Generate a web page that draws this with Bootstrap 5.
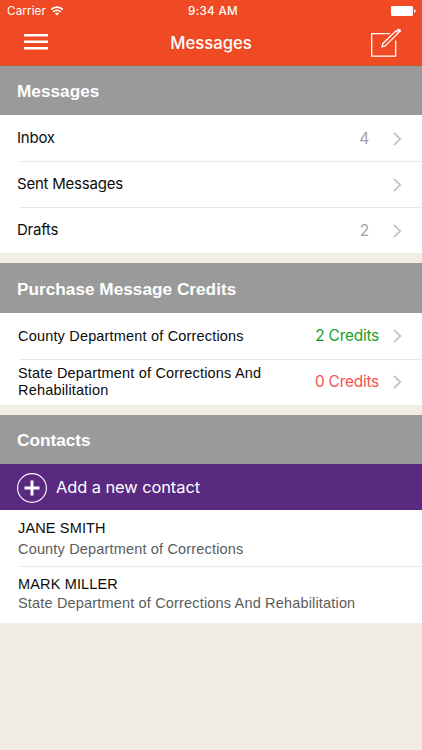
<!DOCTYPE html>
<html lang="en">
<head>
<meta charset="utf-8">
<meta name="viewport" content="width=device-width, initial-scale=1">
<title>Messages</title>
<link href="https://cdn.jsdelivr.net/npm/bootstrap@5.3.0/dist/css/bootstrap.min.css" rel="stylesheet">
<style>
body{background:#f0ede5;font-family:Inter,sans-serif;color:#0c0c0c;height:750px;overflow:hidden}
.app-top{background:#f04a24;height:66px;border-bottom:1px solid #c2583f}
.status-bar{height:22px;padding:0 6px 0 7px;font-size:11.7px;line-height:22px}
.status-bar>*{flex:1 1 0}
.carrier{letter-spacing:.1px}
.clock{letter-spacing:.28px;padding-left:3px}
.title-bar{height:43px;padding:0 20px 0 24px}
.menu-icon{margin-bottom:3px}
.compose-icon{margin-bottom:2px}
.app-title{font-size:16.7px;font-weight:500;line-height:43px;padding-left:3px}
.section-head{background:#9a9a9a;height:49px;padding:1px 17px 0;font:bold 17.2px/48px "Liberation Sans",Arial,sans-serif;letter-spacing:.02px}
.section-tall{height:50px;padding-top:2px}
.rows{--bs-list-group-border-radius:0;--bs-list-group-bg:#fff}
.line-row{position:relative;height:46px;padding:1px 20px 0 17px;border:0;color:#0c0c0c;font-size:15px;letter-spacing:-.22px}
.agency-row.line-row{padding:0 20px 0 18px}
.line-row+.line-row::before,.person+.person::before{content:"";position:absolute;top:0;left:20px;right:0;height:1px;background:#e9e9ea}
.num{color:#a3a3a7;font-size:15.6px;margin-right:24px}
.agency{font-family:"Liberation Sans",Arial,sans-serif;font-size:14.5px;line-height:17px;letter-spacing:.18px}
.credit{font-size:15.4px;letter-spacing:-.22px;margin-right:14px;white-space:nowrap}
.credit-ok{color:#16a02c}.credit-none{color:#f4524f}
.gap-band{margin-bottom:10px}
.add-row{background:#5a2a80;height:46px;padding:1px 17px 0;font-size:16.4px}
.add-label{padding-left:1px;letter-spacing:-.06px}
.person{position:relative;height:56px;padding:9px 18px 0;border:0;font-family:"Liberation Sans",Arial,sans-serif;font-size:14.5px;line-height:18px;color:#0c0c0c}
.person+.person{height:57px}
.person-name{letter-spacing:.15px}
.person-org{color:#5c5c5c;letter-spacing:.17px;line-height:20px}
.person:first-child .person-org{padding-top:2px}
svg{display:block;flex:none}
</style>
<script src="https://cdn.jsdelivr.net/npm/bootstrap@5.3.0/dist/js/bootstrap.bundle.min.js"></script>
</head>
<body>
<header class="app-top text-white">
  <div class="status-bar d-flex align-items-center">
    <div class="d-flex align-items-center"><span class="carrier">Carrier</span>
      <svg class="ms-1" width="14" height="10" viewBox="0 0 14 10" fill="none" stroke="#fff" stroke-width="1.7"><path d="M1.2 3.6a8.2 8.2 0 0 1 11.6 0M3.3 5.8a5.2 5.2 0 0 1 7.4 0"/><path d="M7 9.6 4.9 7.5a3 3 0 0 1 4.2 0z" fill="#fff" stroke="none"/></svg>
    </div>
    <div class="text-center fw-medium clock">9:34 AM</div>
    <div class="d-flex justify-content-end">
      <svg width="25" height="10" viewBox="0 0 25 10" fill="#fff"><rect width="22" height="10" rx="1.2"/><path d="M23 3.2q1.6 .4 1.6 1.8T23 6.8z"/></svg>
    </div>
  </div>
  <nav class="title-bar d-flex align-items-center justify-content-between">
    <svg class="menu-icon" width="24" height="16" viewBox="0 0 24 16" fill="#fff"><path d="M0 0h24v2.4H0zM0 6.5h24v2.4H0zM0 13h24v2.4H0z"/></svg>
    <div class="app-title">Messages</div>
    <svg class="compose-icon" width="31" height="30" viewBox="0 0 31 30" fill="none" stroke="#fff" stroke-width="1.3"><path d="M19 5.6H.7v22.6h24V12.5"/><path d="M11 18.8 11.8 15.6 25 2.9 27.2 5.1 14.1 18z"/><path d="M25.7 1.9q2-2 3.6-.5t-.5 3.6z" fill="#fff" stroke="none"/></svg>
  </nav>
</header>
<main>
  <section class="gap-band">
    <div class="section-head text-white">Messages</div>
    <div class="list-group rows">
      <a href="#" class="list-group-item line-row d-flex align-items-center"><span class="me-auto">Inbox</span><span class="num">4</span><svg width="9" height="14" viewBox="0 0 9 14" fill="none" stroke="#c5c5ca" stroke-width="1.9"><path d="M1 .9 7.2 7 1 13.1"/></svg></a>
      <a href="#" class="list-group-item line-row d-flex align-items-center"><span class="me-auto">Sent Messages</span><svg width="9" height="14" viewBox="0 0 9 14" fill="none" stroke="#c5c5ca" stroke-width="1.9"><path d="M1 .9 7.2 7 1 13.1"/></svg></a>
      <a href="#" class="list-group-item line-row d-flex align-items-center"><span class="me-auto">Drafts</span><span class="num">2</span><svg width="9" height="14" viewBox="0 0 9 14" fill="none" stroke="#c5c5ca" stroke-width="1.9"><path d="M1 .9 7.2 7 1 13.1"/></svg></a>
    </div>
  </section>
  <section class="gap-band">
    <div class="section-head section-tall text-white">Purchase Message Credits</div>
    <div class="list-group rows">
      <a href="#" class="list-group-item line-row agency-row d-flex align-items-center"><span class="me-auto agency">County Department of Corrections</span><span class="credit credit-ok">2 Credits</span><svg width="9" height="14" viewBox="0 0 9 14" fill="none" stroke="#c5c5ca" stroke-width="1.9"><path d="M1 .9 7.2 7 1 13.1"/></svg></a>
      <a href="#" class="list-group-item line-row agency-row d-flex align-items-center"><span class="me-auto agency">State Department of Corrections And<br>Rehabilitation</span><span class="credit credit-none">0 Credits</span><svg width="9" height="14" viewBox="0 0 9 14" fill="none" stroke="#c5c5ca" stroke-width="1.9"><path d="M1 .9 7.2 7 1 13.1"/></svg></a>
    </div>
  </section>
  <section>
    <div class="section-head text-white">Contacts</div>
    <div class="add-row text-white d-flex align-items-center">
      <svg width="30" height="30" viewBox="0 0 30 30" fill="none" stroke="#fff"><circle cx="15" cy="15" r="14.4" stroke-width="1.1"/><path d="M15 7.5v15M7.5 15h15" stroke-width="3"/></svg>
      <span class="add-label ms-2">Add a new contact</span>
    </div>
    <div class="list-group rows">
      <div class="list-group-item person"><div class="person-name">JANE SMITH</div><div class="person-org">County Department of Corrections</div></div>
      <div class="list-group-item person"><div class="person-name">MARK MILLER</div><div class="person-org">State Department of Corrections And Rehabilitation</div></div>
    </div>
  </section>
</main>
</body>
</html>
